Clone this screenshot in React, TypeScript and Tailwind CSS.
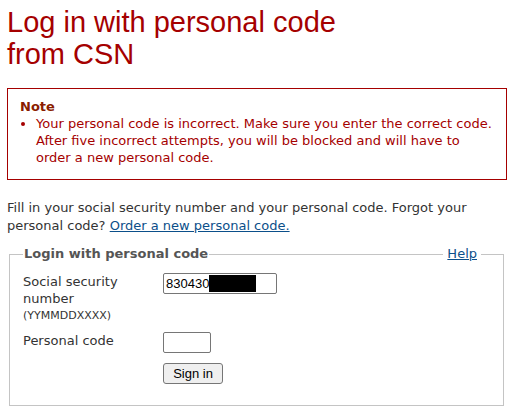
import React from 'react';

const body = { fontFamily: '"DejaVu Sans", Verdana, sans-serif' };
const arial = { fontFamily: '"Liberation Sans", Arial, sans-serif' };

export default function App() {
  return (
    <div className="bg-white w-[515px] h-[412px] overflow-hidden px-[7px] pt-[6px]" style={body}>
      <h1 className="text-[29px] leading-[32px] text-[#a50000] font-normal" style={arial}>
        Log in with personal code
        <br />
        from CSN
      </h1>

      {/* error note */}
      <div className="mt-[18px] w-[500px] border border-[#a50000] pl-[12px] pr-2 pt-[9px] pb-[13px] text-[13px] leading-[17px] text-[#a50000]">
        <div className="font-bold text-[#8a1c00]">Note</div>
        <ul className="list-disc pl-[16px]">
          <li>
            Your personal code is incorrect. Make sure you enter the correct code. After five incorrect attempts, you will be
            blocked and will have to order a new personal code.
          </li>
        </ul>
      </div>

      <p className="mt-[19px] text-[13px] leading-[18px] text-[#333] pr-8">
        Fill in your social security number and your personal code. Forgot your personal code?{' '}
        <a href="#" className="text-[#0b4f8a] underline">Order a new personal code.</a>
      </p>

      <fieldset className="mt-[11px] ml-[2px] w-[495px] h-[160px] border border-[#c4c4c4] pl-[13px] pr-0">
        <legend className="w-full">
          <div className="flex items-center text-[13px] leading-[16px]">
            <span className="font-bold text-[#555] px-[1px]">Login with personal code</span>
            <span className="flex-1 border-t border-[#c4c4c4]" />
            <a href="#" className="text-[#0b4f8a] underline px-[4px]">Help</a>
            <span className="w-[22px] border-t border-[#c4c4c4]" />
          </div>
        </legend>
        <div className="mt-[11px] grid grid-cols-[140px_1fr] gap-y-[8px] text-[13px] leading-[17px] text-[#333]">
          <div>
            Social security
            <br />
            number
            <div className="text-[11px] leading-[16px] mt-[1px]">(YYMMDDXXXX)</div>
          </div>
          <div>
            <div className="w-[114px] h-[21px] border border-[#767676] rounded-[2px] flex items-center px-[2px] text-[13px] text-black" style={arial}>
              830430<span className="inline-block w-[47px] h-[17px] bg-black" />
            </div>
          </div>
          <div>Personal code</div>
          <div>
            <div className="w-[48px] h-[21px] border border-[#767676] rounded-[2px]" />
            <button className="mt-[10px] w-[60px] h-[21px] border border-[#767676] rounded-[3px] bg-[#efefef] text-[13px] text-black" style={arial}>
              Sign in
            </button>
          </div>
        </div>
      </fieldset>
    </div>
  );
}
